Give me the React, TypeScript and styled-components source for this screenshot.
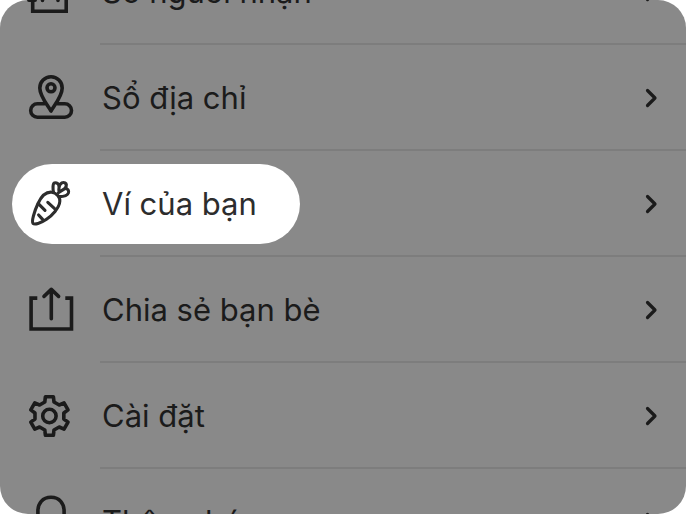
import React from "react";
import styled, { createGlobalStyle } from "styled-components";

const GlobalStyle = createGlobalStyle`
  * { box-sizing: border-box; }
  body { margin: 0; background: #ffffff; }
`;

const Screen = styled.nav`
  display: flex;
  flex-direction: column;
  justify-content: center;
  height: 100vh;
  overflow: hidden;
  border-radius: 28px;
  background: #898989;
  font-family: Inter, "Noto Sans", sans-serif;
`;

const Menu = styled.ul`
  flex: none;
  margin: 0;
  padding: 0;
  list-style: none;
`;

const Row = styled.li`
  display: flex;
  flex-direction: column;
`;

const Divider = styled.div`
  height: 2px;
  margin-left: 100px;
  background: #7d7d7d;
`;

const RowButton = styled.button`
  display: flex;
  align-items: center;
  justify-content: space-between;
  height: 104px;
  padding: 2px 25px 0 12px;
  border: 0;
  background: none;
  color: #1b1b1b;
  font: inherit;
  text-align: left;
  cursor: pointer;
`;

const Entry = styled.span<{ $active: boolean }>`
  display: flex;
  align-items: center;
  gap: 27px;
  height: 80px;
  padding: 0 43px 0 15px;
  border-radius: 40px;
  background: ${(p) => (p.$active ? "#ffffff" : "transparent")};
  color: ${(p) => (p.$active ? "#2d2d2d" : "inherit")};
`;

const Label = styled.span`
  font-size: 31px;
  line-height: 40px;
  white-space: nowrap;
`;

const Glyph = styled.svg`
  flex: none;
  overflow: visible;
  fill: none;
  stroke: currentColor;
  stroke-width: 3.6;
  stroke-linecap: round;
  stroke-linejoin: round;
`;

const Icon = ({ children }: { children: React.ReactNode }) => (
  <Glyph width="48" height="48" viewBox="0 0 48 48" aria-hidden="true">
    {children}
  </Glyph>
);

const ContactsIcon = () => (
  <Icon>
    <path d="M5.7 3.5H39.2V43.2H5.7Z" strokeLinejoin="miter" />
    <path d="M2 14H8M2 32H8" strokeWidth="4" />
    <circle cx="23" cy="16" r="5" />
    <path d="M15.5 32.5C15.5 27 18 24 23.2 24C28.4 24 31 27 31 32.5" />
  </Icon>
);

const AddressIcon = () => (
  <Icon>
    <path d="M17.5 29.8H10.4A6.7 6.7 0 0 0 10.4 43.2H37.8A6.7 6.7 0 0 0 37.8 29.8H30.5" />
    <path d="M24 37C20 30.5 12.8 22 12.8 14A11.2 11.2 0 0 1 35.2 14C35.2 22 28 30.5 24 37Z" />
    <circle cx="24" cy="13.8" r="4" />
  </Icon>
);

const CarrotIcon = () => (
  <Icon>
    <g strokeWidth="3.1">
      <path d="M6 43.3C4.5 41.5 7 32 11 23.5C14.5 16 19 11.8 24.5 12.2C29.5 12.7 33.3 17 32.8 21.5C32.3 28 25 35.5 19.5 39.3C13.5 43.5 7.5 44.8 6 43.3Z" />
      <path d="M26.6 12.5C25.8 9.5 25.6 3.6 27.4 3C29.6 2.3 31.6 3.6 32.2 6C33.6 3 36 1.8 38 2.9C39.8 4 39.5 6.2 38.2 8.4C40.8 8.6 42.3 10.7 41.4 13C40.4 15.3 36.5 16.6 32.4 16.6" />
      <path d="M32.2 6L31.8 10.2M38.2 8.4L31.4 12.6" />
      <path d="M11.3 23.6L18 30.3M20.8 22.4L27.6 28.6M11.6 35L15.6 39.4" />
    </g>
  </Icon>
);

const ShareIcon = () => (
  <Icon>
    <path d="M10.3 12.1H4.1V43H44.5V12.1H38.3" strokeLinecap="butt" strokeLinejoin="miter" />
    <path d="M24.3 32.8V3.4M17 10.4L24.3 3.4L31.6 10.4" />
  </Icon>
);

const gearOutline = Array.from({ length: 6 }, (_, tooth) => {
  const turn = (tooth * Math.PI) / 3;
  return [
    [-4.6, -14],
    [-4, -19.2],
    [4, -19.2],
    [4.6, -14],
  ]
    .map(([x, y]) => {
      const px = 22.4 + x * Math.cos(turn) - y * Math.sin(turn);
      const py = 24 + x * Math.sin(turn) + y * Math.cos(turn);
      return `${px.toFixed(2)},${py.toFixed(2)}`;
    })
    .join(" ");
}).join(" ");

const SettingsIcon = () => (
  <Icon>
    <polygon points={gearOutline} />
    <circle cx="22.4" cy="24" r="6.7" />
  </Icon>
);

const BellIcon = () => (
  <Icon>
    <path d="M24 -0.7C15.5 -0.7 10.9 5.5 10.9 13V26L6 35H42L37.1 26V13C37.1 5.5 32.5 -0.7 24 -0.7Z" />
    <path d="M18 41Q24 47 30 41" />
  </Icon>
);

const Chevron = () => (
  <Glyph width="20" height="24" viewBox="0 0 20 24" aria-hidden="true">
    <path d="M6.5 4.5L14 12L6.5 19.5" strokeWidth="3.2" />
  </Glyph>
);

const items = [
  { label: "Sổ người nhận", icon: <ContactsIcon /> },
  { label: "Sổ địa chỉ", icon: <AddressIcon /> },
  { label: "Ví của bạn", icon: <CarrotIcon />, active: true },
  { label: "Chia sẻ bạn bè", icon: <ShareIcon /> },
  { label: "Cài đặt", icon: <SettingsIcon /> },
  { label: "Thông báo", icon: <BellIcon /> },
];

export default function App() {
  return (
    <>
      <GlobalStyle />
      <Screen>
        <Menu>
          {items.map(({ label, icon, active = false }) => (
            <Row key={label}>
              <RowButton type="button">
                <Entry $active={active}>
                  {icon}
                  <Label>{label}</Label>
                </Entry>
                <Chevron />
              </RowButton>
              <Divider />
            </Row>
          ))}
        </Menu>
      </Screen>
    </>
  );
}
